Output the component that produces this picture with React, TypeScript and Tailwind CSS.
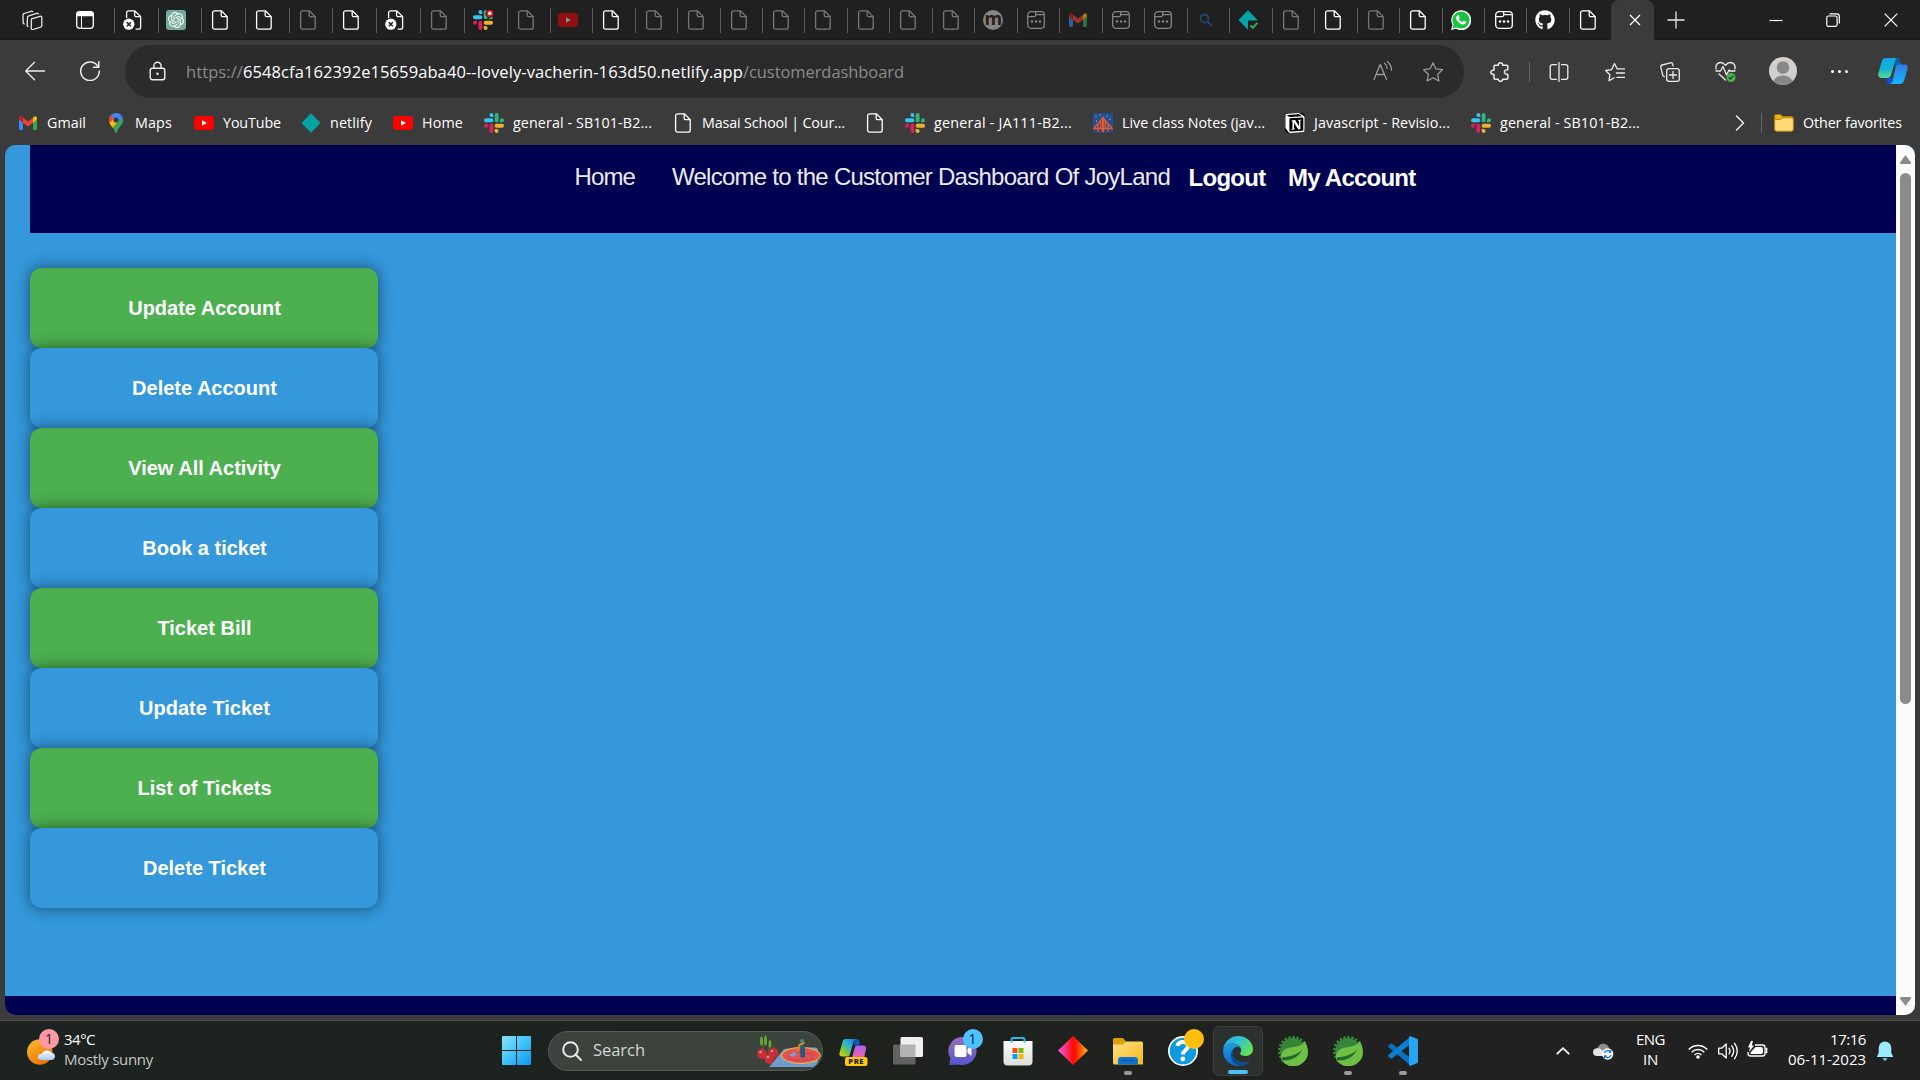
import { useLayoutEffect, useRef, useState, type ReactNode } from "react";
import { FaGithub } from "react-icons/fa";
import { SiOpenai, SiNotion } from "react-icons/si";

/** Text set to a given advance width by adjusting its letter spacing. */
function Fit({ text, width, className = "" }: { text: string; width: number; className?: string }) {
  const ref = useRef<HTMLSpanElement>(null);
  const [spacing, setSpacing] = useState(0);
  useLayoutEffect(() => {
    if (ref.current) setSpacing((width - ref.current.getBoundingClientRect().width) / text.length);
  }, [text, width]);
  return (
    <span ref={ref} className={`inline-block whitespace-pre ${className}`} style={{ letterSpacing: `${spacing}px` }}>
      {text}
    </span>
  );
}

/* ---------- small icons ---------- */

const PageIcon = ({ className = "" }: { className?: string }) => (
  <svg viewBox="0 0 20 20" className={`h-5 w-5 ${className}`} fill="none" stroke="currentColor" strokeWidth="1.3" strokeLinejoin="round">
    <path d="M4.6.8h6.8l5.8 5.8v10.6a2 2 0 0 1-2 2H4.6a2 2 0 0 1-2-2V2.8a2 2 0 0 1 2-2Z" />
    <path d="M11.2.8v4.4a1.5 1.5 0 0 0 1.5 1.5h4.5" />
  </svg>
);

const BlockedPageIcon = () => (
  <svg viewBox="0 0 20 20" className="h-5 w-5" fill="none">
    <path d="M3.6 8V2.8a2 2 0 0 1 2-2h6.2l5.8 5.8v10.6a2 2 0 0 1-2 2h-3M11.6.8v4.4a1.5 1.5 0 0 0 1.5 1.5h4.5" stroke="#fff" strokeWidth="1.3" />
    <circle cx="5.8" cy="14.2" r="5.6" fill="#fff" />
    <path d="m3.8 12.2 4 4m0-4-4 4" stroke="#202020" strokeWidth="1.5" />
  </svg>
);

const SlackIcon = ({ badge = false }: { badge?: boolean }) => (
  <svg viewBox="0 0 20 20" className="h-5 w-5">
    <g fill="#36c5f0">
      <rect x="0" y="5.3" width="9.3" height="3.9" rx="1.95" />
      <path d="M7.4 0a1.95 1.95 0 0 1 1.9 2v2H7.4a2 2 0 0 1 0-4Z" />
    </g>
    <g fill="#2eb67d">
      <rect x="10.7" y="0" width="3.9" height="9.3" rx="1.95" />
      <path d="M20 7.3a1.95 1.95 0 0 1-2 1.9h-2V7.3a2 2 0 0 1 4 0Z" />
    </g>
    <g fill="#ecb22e">
      <rect x="10.7" y="10.8" width="9.3" height="3.9" rx="1.95" />
      <path d="M12.6 20a1.95 1.95 0 0 1-1.9-2v-2h1.9a2 2 0 0 1 0 4Z" />
    </g>
    <g fill="#e01e5a">
      <rect x="5.4" y="10.7" width="3.9" height="9.3" rx="1.95" />
      <path d="M0 12.7a1.95 1.95 0 0 1 2-1.9h2v1.9a2 2 0 0 1-4 0Z" />
    </g>
    {badge && (
      <>
        <circle cx="16.8" cy="3.4" r="4.4" fill="#202020" />
        <circle cx="16.8" cy="3.4" r="3.6" fill="#e8101c" />
        <circle cx="16.8" cy="3.4" r="1.8" fill="#fff" />
      </>
    )}
  </svg>
);

const YouTubeIcon = ({ className = "" }: { className?: string }) => (
  <svg viewBox="0 0 20 20" className={`h-5 w-5 ${className}`}>
    <rect x="0" y="3" width="20" height="14" rx="3.2" fill="#f00" />
    <path d="M8 7.2v5.6l4.8-2.8Z" fill="#fff" />
  </svg>
);

const GmailIcon = ({ className = "" }: { className?: string }) => (
  <svg viewBox="0 0 20 20" className={`h-5 w-5 ${className}`}>
    <path d="M1 5v10.8c0 .7.5 1.2 1.2 1.2H5V9.2L1 6Z" fill="#4285f4" />
    <path d="M19 5v10.8c0 .7-.5 1.2-1.2 1.2H15V9.2L19 6Z" fill="#34a853" />
    <path d="M15 5.5v4.2l4-3.1V5.3c0-2-2.2-2.6-3.4-1.5Z" fill="#fbbc04" />
    <path d="M5 9.7V4.8l5 3.7 5-3.7v4.9l-5 3.8Z" fill="#ea4335" />
    <path d="M1 5.3v1.3l4 3.1V4.8l-.6-1C3.200 2.800 1 3.400 1 5.300Z" fill="#c5221f" />
  </svg>
);

const MapsIcon = () => (
  <svg viewBox="0 0 20 20" className="h-5 w-5">
    <path d="M10 0a7 7 0 0 1 6.700 5L10 12.500 4.800 11.500C3.500 9.500 3 8.500 3 7a7 7 0 0 1 7-7Z" fill="#4285f4" />
    <path d="M4.600 2.500 8 5.500l-4.300 5C3.200 9.200 3 8.200 3 7c0-1.700.6-3.300 1.600-4.500Z" fill="#ea4335" />
    <path d="m3.600 10 4.200-4.900 4.700 3.500-5.900 6.300C5.200 13 4.300 11.800 3.600 10Z" fill="#fbbc04" />
    <path d="M16.700 5c.9 2.900 0 5.300-1.600 7.200-2 2.400-3.500 4.300-4 6.800-.3 1.300-1.700 1.300-2 0-.5-1.700-1.200-2.900-2.300-4.300Z" fill="#34a853" />
    <circle cx="10" cy="7" r="2.600" fill="#303d55" />
  </svg>
);

const NetlifyIcon = ({ check = false }: { check?: boolean }) => (
  <svg viewBox="0 0 20 20" className="h-5 w-5">
    <path d="M10 .2 19.500 10 10 19.800.5 10Z" fill="#05a3a4" />
    {check && (
      <>
        <path d="M10 20v-9.500h10V20Z" fill="#202020" />
        <path d="m12.300 15.300 2.500 2.500 4.500-5" fill="none" stroke="#2fb84a" strokeWidth="1.900" />
      </>
    )}
  </svg>
);

const CalendarIcon = ({ className = "" }: { className?: string }) => (
  <svg viewBox="0 0 20 20" className={`h-5 w-5 ${className}`} fill="none" stroke="currentColor" strokeWidth="1.300">
    <rect x="1.700" y="1.700" width="16.600" height="16.600" rx="3.200" />
    <path d="M1.700 6.600h6.500c1.200 0 1.500-.7 1.500-1.500V1.700M9.700 4.600h8" />
    <g fill="currentColor" stroke="none">
      <circle cx="6" cy="11.500" r="1.200" /><circle cx="10" cy="11.500" r="1.200" /><circle cx="14" cy="11.500" r="1.200" />
    </g>
  </svg>
);

const NotionIcon = () => (
  <span className="grid h-5 w-5 place-items-center">
    <SiNotion className="h-5 w-5 rounded-sm bg-black text-white" />
  </span>
);

const BridgeIcon = () => (
  <svg viewBox="0 0 20 20" className="h-5 w-5">
    <path d="M0 0h20v20H0Z" fill="#214f92" />
    <path d="M0 17.500h20V20H0Z" fill="#2b4478" />
    <path d="M10 4v15M0 15.500h20M1 15l9-10 9 10M5 10.500V19M15 10.500V19M7.500 8v8M12.500 8v8" stroke="#e8582a" strokeWidth="1.300" fill="none" />
    <path d="M8.700 4h2.600v15H8.700Z" fill="#e8582a" />
    <g fill="#fff"><circle cx="3" cy="3" r=".6" /><circle cx="7" cy="2" r=".5" /><circle cx="14" cy="3" r=".6" /><circle cx="17" cy="6" r=".6" /><circle cx="3.500" cy="8" r=".5" /></g>
  </svg>
);

const FolderIcon = () => (
  <svg viewBox="0 0 20 20" className="h-5 w-5">
    <path d="M.7 3.200C.7 2 1.300 1.500 2.200 1.500h4.500l1.800 2H17a2.200 2.200 0 0 1 2.300 2.200V8H.7Z" fill="#e9b520" stroke="#a87a08" />
    <path d="M.7 6.500h5.600l2.200-1.700h8.800a2 2 0 0 1 2 2v9.400a2 2 0 0 1-2 2H2.700a2 2 0 0 1-2-2Z" fill="#ffd978" stroke="#b98a12" />
  </svg>
);

/* ---------- tab strip ---------- */

type TabKind = "blocked" | "gpt" | "page" | "dim" | "slack" | "yt" | "m" | "cal" | "calDim" | "gmail" | "search" | "netlify" | "whatsapp" | "github";

const tabs: TabKind[] = [
  "blocked", "gpt", "page", "page", "dim", "page", "blocked", "dim", "slack",
  "dim", "yt", "page", "dim", "dim", "dim", "dim", "dim", "dim", "dim", "dim",
  "m", "calDim", "gmail", "calDim", "calDim", "search", "netlify", "dim", "page",
  "dim", "page", "whatsapp", "cal", "github", "page",
];

function TabGlyph({ kind }: { kind: TabKind }) {
  switch (kind) {
    case "blocked": return <BlockedPageIcon />;
    case "gpt": return <span className="-ml-px grid h-5 w-5 place-items-center rounded-[3px] bg-[#74aa9c]"><SiOpenai className="h-4 w-4 text-white" /></span>;
    case "page": return <PageIcon className="text-white" />;
    case "dim": return <PageIcon className="text-[#777]" />;
    case "slack": return <SlackIcon badge />;
    case "yt": return <YouTubeIcon className="-ml-px opacity-50" />;
    case "m": return <span className="grid h-5 w-5 place-items-center rounded-full bg-[#878583] pb-1 font-['Open_Sans',sans-serif] text-[18px] leading-4 font-bold text-[#2b1c18]">m</span>;
    case "cal": return <CalendarIcon className="ml-px text-white" />;
    case "calDim": return <CalendarIcon className="text-[#858585]" />;
    case "gmail": return <GmailIcon className="opacity-60" />;
    case "search": return <svg viewBox="0 0 20 20" className="h-5 w-5" fill="none" stroke="#1b466f" strokeWidth="1.800"><circle cx="8.500" cy="8.500" r="4" /><path d="m11.500 11.500 4.500 4.500" /></svg>;
    case "netlify": return <NetlifyIcon check />;
    case "whatsapp": return <svg viewBox="0 0 20 20" className="h-5 w-5"><path d="M0 20 1.500 15A10 10 0 1 1 5 18.700Z" fill="#fff" /><circle cx="10" cy="10" r="8.600" fill="#18c43f" /><path d="M1.600 18.400 3 13l3.500 4Z" fill="#18c43f" /><path d="M6.900 5.200c.5-.2.900 0 1 .3l.8 1.900c.1.300 0 .5-.9 1.500.8 1.500 1.900 2.500 3.500 3.200l1-1.200c.2-.3.5-.3.800-.2l1.700.9c.4.2.4.4.3.9-.4 1.600-2 2.200-3.400 1.900-3.200-.7-5.300-2.700-6.400-5.200-.5-1.400-.1-3.200 1.600-4Z" fill="#fff" /></svg>;
    case "github": return <FaGithub className="h-5 w-5 text-white" />;
  }
}

function TabStrip() {
  return (
    <div className="flex h-10 items-center bg-[#202020] text-white shadow-[inset_0_-1px_0_#1a1a1a]">
      <div className="flex w-[114px] items-center">
        <svg viewBox="0 0 22 20" className="ml-[21px] h-5 w-[22px]" fill="none" stroke="#e6e6e6" strokeWidth="1.300" strokeLinejoin="round">
          <path d="M10.500 8.800 19 6.300c1-.3 1.800.2 1.800 1.200v8c0 .9-.4 1.400-1.200 1.700L12 19.500c-1 .3-1.700-.1-1.700-1.100v-8c0-.8.200-1.300.8-1.600Z" />
          <path d="M7.500 16.500c-1 0-1.500-.6-1.300-1.500l.3-7.500c0-.9.500-1.400 1.300-1.700l7.700-2.400c1-.3 1.800.1 1.900 1" />
          <path d="M3.600 14c-1-.1-1.500-.7-1.500-1.500L2 5.200c0-.9.500-1.500 1.300-1.700l6.700-2.200c1-.3 1.700 0 1.900.8" />
        </svg>
        <svg viewBox="0 0 18 18" className="ml-[33px] h-[18px] w-[18px]" fill="none">
          <rect x=".7" y=".7" width="16.600" height="16.600" rx="3" stroke="#fff" strokeWidth="1.300" />
          <path d="M.3 5.200V3A2.700 2.700 0 0 1 3 .3h12A2.700 2.700 0 0 1 17.700 3v2.200ZM5 5v12h1V5Z" fill="#fff" />
        </svg>
      </div>
      {tabs.map((kind, i) => (
        <div key={i} className={`flex h-[25px] shrink-0 items-center border-l border-[#5c5c5c] pl-[8px] ${i < 9 ? "w-[43.700px]" : "w-[42.480px]"}`}>
          <TabGlyph kind={kind} />
        </div>
      ))}
      <div className="flex h-10 w-[43px] shrink-0 items-center justify-center self-end rounded-t-[8px] bg-[#3b3b3b] pl-1">
        <svg viewBox="0 0 12 12" className="h-3 w-3" stroke="#fff" strokeWidth="1.300"><path d="m1 1 10 10M11 1 1 11" /></svg>
      </div>
      <svg viewBox="0 0 18 18" className="ml-[13px] h-[18px] w-[18px]" stroke="#e8e8e8" strokeWidth="1.300"><path d="M9 .5v17M.5 9h17" /></svg>
      <div className="ml-auto flex items-center">
        <svg viewBox="0 0 14 14" className="mr-[43px] h-[14px] w-[14px]" stroke="#fff" strokeWidth="1.200"><path d="M.5 7.500h13" /></svg>
        <svg viewBox="0 0 14 14" className="mr-[44px] h-[14px] w-[14px]" fill="none" stroke="#fff" strokeWidth="1.200"><rect x=".8" y="3" width="10.300" height="10.300" rx="1.500" /><path d="M3.500.8h7.200c1.600 0 2.600 1 2.600 2.600v7.200" /></svg>
        <svg viewBox="0 0 14 14" className="mr-[22px] h-[14px] w-[14px]" stroke="#fff" strokeWidth="1.200"><path d="m.7.7 12.600 12.600M13.300.7.7 13.300" /></svg>
      </div>
    </div>
  );
}

/* ---------- toolbar ---------- */

const Cell = ({ className, children }: { className: string; children: ReactNode }) => (
  <div className={`flex shrink-0 items-center justify-center ${className}`}>{children}</div>
);

const line = { fill: "none", stroke: "#ececec", strokeWidth: 1.3, strokeLinejoin: "round", strokeLinecap: "round" } as const;

function Toolbar() {
  return (
    <div className="flex h-[58px] items-center pt-[5px]">
      <Cell className="w-[70px]"><svg viewBox="0 0 20 20" className="mb-px h-5 w-5" {...line}><path d="M19.500 10H.7M9.500 1.300.7 10l8.800 8.700" /></svg></Cell>
      <Cell className="w-10"><svg viewBox="0 0 20 20" className="mb-px h-5 w-5" {...line} strokeWidth={1.5}><path d="M18.200 5.800A9.300 9.300 0 1 0 19.300 10M18.800.8v5.400h-5.300" /></svg></Cell>
      <div className="ml-[15px] flex h-[53px] w-[1339px] shrink-0 items-center rounded-full bg-[#2b2b2b] pl-[24px] font-['Open_Sans',sans-serif] text-[16.500px] text-[#8c8c8c]">
        <svg viewBox="0 0 18 20" className="mr-[20px] mb-px h-5 w-[17px]" {...line} strokeWidth={1.5}><rect x="1.300" y="7" width="15.400" height="12.200" rx="2.300" /><path d="M5.200 7V4.500a3.800 3.800 0 0 1 7.600 0V7" /><circle cx="9" cy="13" r=".6" fill="#fff" /></svg>
        <span className="flex leading-6">
          <Fit text="https://" width={57} />
          <Fit text="6548cfa162392e15659aba40--lovely-vacherin-163d50.netlify.app" width={500} className="text-white" />
          <Fit text="/customerdashboard" width={161} />
        </span>
        <svg viewBox="0 0 20 20" className="mr-[30px] mb-px ml-auto h-5 w-5" fill="none" stroke="#9a9a9a" strokeWidth="1.300" strokeLinecap="round"><path d="M1 18.500 7 4h.5l6 14.500M3.200 13.500h8.200M11.500 2.200c1.600 1.200 2.500 3 2.500 5.200M14.500.800c2.500 2 4 5 4 8.400" /></svg>
        <svg viewBox="0 0 20 20" className="mr-[21px] h-5 w-5" fill="none" stroke="#9a9a9a" strokeWidth="1.300" strokeLinejoin="round"><path d="m10 .8 2.900 6 6.500.9-4.700 4.600 1.100 6.600L10 15.800l-5.800 3.100 1.100-6.600L.6 7.700l6.500-.9Z" /></svg>
      </div>
      <Cell className="ml-[9px] w-[53px]">
        <svg viewBox="0 0 20 20" className="h-5 w-5" {...line} strokeWidth={1.5}><path d="M5 3.200h3.300c-.2-3.200 4.600-3.200 4.400 0h4.100c.7 0 1 .4 1 1v3.500c-4.500-.7-4.500 5.300 0 4.600v3.900c0 .6-.3 1-1 1h-4.100c.2 2.800-4.600 2.800-4.400 0H5c-.7 0-1-.4-1-1v-3.700c-4.300.2-4.300-4.600 0-4.400V4.200c0-.6.300-1 1-1Z" /></svg>
      </Cell>
      <Cell className="w-[6px]"><div className="h-5 w-px bg-[#666]" /></Cell>
      <Cell className="w-[53px]"><svg viewBox="0 0 20 20" className="h-5 w-5" {...line}><path d="M7.500 2.700H3.200a2 2 0 0 0-2 2v10.600a2 2 0 0 0 2 2h4.300M12.500 2.700h4.300a2 2 0 0 1 2 2v10.600a2 2 0 0 1-2 2h-4.300M10 .5v19" /></svg></Cell>
      <Cell className="w-[60px]"><svg viewBox="0 0 20 20" className="h-5 w-5" {...line}><path d="M7.500 16.800 4 18.800l.9-6L.7 8.500l6-.9L9.500 1.500l2.600 5.300M12 6.800h7.500M11.300 11h8.200M12 15.300h7.500M7.500 16.800l1.700-1" /></svg></Cell>
      <Cell className="w-[50px]"><svg viewBox="0 0 20 20" className="h-5 w-5" {...line}><rect x="6.700" y="6.700" width="12.600" height="12.600" rx="2.300" /><path d="M13 9.500v7M9.500 13h7M4.500 14.700c-1 0-1.500-.5-1.700-1.300L.8 5.200c-.2-1.200.2-1.900 1.300-2.200l8.300-2.200c1.100-.3 1.900.1 2.200 1.200l.5 1.800" /></svg></Cell>
      <Cell className="w-[60px]">
        <svg viewBox="0 0 21 21" className="h-[21px] w-[21px]" {...line}>
          <path d="M1.200 8C0 4.500 2.500 1.500 5.500 1.500c2.300 0 3.700 1.200 5 2.700 1.300-1.500 2.700-2.700 5-2.700 3 0 5.500 3 4.300 6.500M1 10h4.500l2.500-4.500 3.500 8.500 2.500-5 .8 1H20M4 13l6.500 6" />
          <circle cx="16" cy="16.500" r="4.500" fill="#4caf50" stroke="none" /><path d="m14 16.600 1.400 1.400 2.600-2.900" stroke="#174a1b" />
        </svg>
      </Cell>
      <Cell className="w-[56px]">
        <svg viewBox="0 0 28 28" className="mb-px h-7 w-7"><defs><clipPath id="av"><circle cx="14" cy="14" r="14" /></clipPath></defs><g clipPath="url(#av)"><path d="M0 0h28v28H0Z" fill="#d2d0ce" /><circle cx="14" cy="10.500" r="6.300" fill="#8a8886" /><ellipse cx="14" cy="26" rx="10" ry="7.500" fill="#8a8886" /></g></svg>
      </Cell>
      <Cell className="w-[57px]"><div className="flex gap-1"><i className="h-[3px] w-[3px] rounded-full bg-white" /><i className="h-[3px] w-[3px] rounded-full bg-white" /><i className="h-[3px] w-[3px] rounded-full bg-white" /></div></Cell>
      <Cell className="w-[49px]">
        <svg viewBox="0 0 30 28" className="mb-px h-7 w-[30px]">
          <defs>
            <linearGradient id="c1" x1="0" y1="0" x2="0" y2="1"><stop offset="0" stopColor="#0fa8ea" /><stop offset=".5" stopColor="#12b3d5" /><stop offset="1" stopColor="#52dc92" /></linearGradient>
            <linearGradient id="c2" x1="0" y1="0" x2="0" y2="1"><stop offset="0" stopColor="#2f7be8" /><stop offset="1" stopColor="#14b9f5" /></linearGradient>
          </defs>
          <path d="M15.500 1h4c1.500 0 2 1 2.500 2.500L23.500 8 17 10Z" fill="#0a62a3" />
          <path d="M8 21h7l-2 6h-1.500c-1.500 0-2-1-2.300-2Z" fill="#1648e0" />
          <path d="M7.500 1H20c-1.700 0-2.500 1-3 3l-4 14c-.6 2-1.500 3-3.500 3H3.500C.8 21-.4 19 .3 16.500l3.400-12C4.400 2.200 5.500 1 7.500 1Z" fill="url(#c1)" />
          <path d="M20.500 7.500h6c2.800 0 3.700 2 3 4.500l-3.400 11.500c-.7 2.500-1.900 3.500-4 3.500H11.500c1.500 0 2.400-1 3-3l3-13c.4-2.300 1.200-3.500 3-3.500Z" fill="url(#c2)" />
        </svg>
      </Cell>
    </div>
  );
}

/* ---------- favourites ---------- */

const bookmarks: { icon: ReactNode; label: string; text: number; cell: string }[] = [
  { icon: <GmailIcon />, label: "Gmail", text: 39, cell: "w-[88px]" },
  { icon: <MapsIcon />, label: "Maps", text: 37, cell: "w-[88px]" },
  { icon: <YouTubeIcon />, label: "YouTube", text: 58, cell: "w-[107px]" },
  { icon: <NetlifyIcon />, label: "netlify", text: 42, cell: "w-[92px]" },
  { icon: <YouTubeIcon />, label: "Home", text: 41, cell: "w-[91px]" },
  { icon: <SlackIcon />, label: "general - SB101-B2...", text: 139, cell: "w-[189px]" },
  { icon: <PageIcon className="text-white" />, label: "Masai School | Cour...", text: 143, cell: "w-[192px]" },
  { icon: <PageIcon className="text-white" />, label: "", text: 0, cell: "w-[40px]" },
  { icon: <SlackIcon />, label: "general - JA111-B2...", text: 138, cell: "w-[188px]" },
  { icon: <BridgeIcon />, label: "Live class Notes (jav...", text: 143, cell: "w-[192px]" },
  { icon: <NotionIcon />, label: "Javascript - Revisio...", text: 136, cell: "w-[186px]" },
  { icon: <SlackIcon />, label: "general - SB101-B2...", text: 140, cell: "w-[186px]" },
];

function Favorites() {
  return (
    <div className="flex h-[47px] items-center pt-[3px] pl-[18px] font-['Open_Sans',sans-serif] text-[14.300px] leading-5 text-white">
      {bookmarks.map((b, i) => (
        <div key={i} className={`flex shrink-0 items-center gap-[9px] ${b.cell}`}>
          <span className="shrink-0">{b.icon}</span>
          {b.label && <Fit text={b.label} width={b.text} />}
        </div>
      ))}
      <div className="ml-auto flex items-center">
        <svg viewBox="0 0 10 16" className="mr-[16px] h-4 w-[10px]" {...line} strokeWidth={1.5}><path d="m1.500 1 7 7-7 7" /></svg>
        <div className="mr-[12px] h-5 w-px bg-[#666]" />
        <FolderIcon />
        <Fit text="Other favorites" width={99} className="mr-[18px] ml-[9px]" />
      </div>
    </div>
  );
}

/* ---------- page ---------- */

const actions = ["Update Account", "Delete Account", "View All Activity", "Book a ticket", "Ticket Bill", "Update Ticket", "List of Tickets", "Delete Ticket"];

function Page() {
  return (
    <div className="mx-[5px] flex h-[870px] overflow-hidden rounded-[10px] bg-[#3498db] font-['Liberation_Sans',Arial,sans-serif]">
      <div className="flex flex-1 flex-col">
        <header className="ml-[25px] flex h-[88px] bg-[#000050] pt-[18px] pl-[544.500px] text-[24px] leading-7 text-[#ebebf2]">
          <Fit text="Home" width={60.500} />
          <Fit text="Welcome to the Customer Dashboard Of JoyLand" width={498} className="ml-[37px]" />
          <Fit text="Logout" width={77} className="mt-px ml-[18.500px] font-bold text-white" />
          <Fit text="My Account" width={127.500} className="mt-px ml-[22.500px] font-bold text-white" />
        </header>
        <main className="mt-[35px] ml-[25px] flex w-[348px] flex-col">
          {actions.map((label, i) => (
            <button key={label} className={`h-20 rounded-[12px] pl-px text-center text-[20px] leading-6 font-bold text-white shadow-[0_0_15px_rgba(0,0,0,0.5)] ${i % 2 ? "bg-[#3498db]" : "bg-[#4caf50]"}`}>
              {label}
            </button>
          ))}
        </main>
        <footer className="mt-auto h-[19px] bg-[#000050]" />
      </div>
      <div className="flex w-[19px] flex-col items-center bg-[#fcfcfc]">
        <svg viewBox="0 0 11 9" className="mt-[10px] h-[9px] w-[11px]" fill="#8b8b8b"><path d="M5.500 0 11 7.500c.2.800-.2 1.500-1 1.500H1c-.8 0-1.200-.7-1-1.500Z" /></svg>
        <div className="mt-[9px] h-[531px] w-[11px] rounded-full bg-[#8b8b8b]" />
        <svg viewBox="0 0 11 9" className="mt-auto mb-[9px] h-[9px] w-[11px] rotate-180" fill="#8b8b8b"><path d="M5.500 0 11 7.500c.2.800-.2 1.500-1 1.500H1c-.8 0-1.200-.7-1-1.500Z" /></svg>
      </div>
    </div>
  );
}

/* ---------- taskbar ---------- */

function TaskbarApp({ children, running = "", active = false, badge }: { children: ReactNode; running?: string; active?: boolean; badge?: ReactNode }) {
  return (
    <div className="flex w-[55px] shrink-0 justify-center">
      <div className={`relative flex h-[50px] w-[50px] items-center justify-center rounded-[6px] ${active ? "border border-[#3a3f3b] bg-[#2d312e]" : ""}`}>
        {children}
        {badge}
        {running && <i className={`absolute bottom-px h-1 rounded-full ${running}`} />}
      </div>
    </div>
  );
}

const SpringIcon = () => (
  <svg viewBox="0 0 30 30" className="h-[30px] w-[30px]">
    <circle cx="15" cy="15" r="13.800" fill="none" stroke="#3d8d3c" strokeWidth="2.400" strokeDasharray="2.200 1.800" />
    <circle cx="15" cy="15" r="12.900" fill="#36863a" />
    <path d="M27 5c3 7 4 13 1.500 17.500A15 15 0 0 1 4 25c-2.500-5-.5-10.500 5-12.500 7-2.500 14-1 18-7.500Z" fill="#6fbf44" />
    <path d="M3.500 24.500C14 25 21 21 24.500 12.500 22 17 15 20.500 4 21.500Z" fill="#1f6a2c" />
  </svg>
);

function Taskbar() {
  return (
    <div className="flex h-[59px] items-center bg-linear-to-r from-[#1c2321] via-[#1d221d] via-45% to-[#212121] to-80% font-['Open_Sans',sans-serif] text-white">
      <div className="flex w-[475px] items-center pl-[27px]">
        <div className="relative -mt-1 h-[34px] w-[31px]">
          <svg viewBox="0 0 31 34" className="h-[34px] w-[31px]">
            <defs>
              <linearGradient id="sun" x1="0" y1="0" x2=".6" y2="1"><stop offset="0" stopColor="#f8c029" /><stop offset="1" stopColor="#f0700f" /></linearGradient>
              <linearGradient id="cl" x1="0" y1="0" x2="0" y2="1"><stop offset="0" stopColor="#fff" /><stop offset="1" stopColor="#a9c8f4" /></linearGradient>
            </defs>
            <circle cx="12.800" cy="20" r="12.800" fill="url(#sun)" />
            <path d="M14.500 28c-5 0-5-6 .3-6.300C16 18 23 17 24.500 21c4.500-.5 5 7-.5 7Z" fill="url(#cl)" />
          </svg>
          <div className="absolute -top-[3px] left-[12px] grid h-5 w-5 place-items-center rounded-full bg-[#ff99a4] text-[14px] leading-none text-[#222]">1</div>
        </div>
        <div className="-mt-[4px] ml-[6px] flex flex-col text-[15px] leading-5">
          <Fit text="34°C" width={31} className="self-start" />
          <Fit text="Mostly sunny" width={89} className="self-start text-[#c6c8c6]" />
        </div>
      </div>
      <svg viewBox="0 0 29 29" className="mr-[17px] ml-[27px] h-[29px] w-[29px]">
        <defs><linearGradient id="win" x1="0" y1="0" x2="1" y2="1"><stop offset="0" stopColor="#8be2fb" /><stop offset=".5" stopColor="#3fc3fa" /><stop offset="1" stopColor="#0f94f2" /></linearGradient></defs>
        <path d="M1 0h13v14H0V1a1 1 0 0 1 1-1Zm14 0h13a1 1 0 0 1 1 1v13H15ZM0 15h14v14H1a1 1 0 0 1-1-1Zm15 0h14v13a1 1 0 0 1-1 1H15Z" fill="url(#win)" />
      </svg>
      <div className="flex h-10 w-[275px] shrink-0 items-center overflow-hidden rounded-full border border-[#565c56] bg-[#3b433c] pl-[13px]">
        <svg viewBox="0 0 20 20" className="h-5 w-5" fill="none" stroke="#e8ebe8" strokeWidth="2"><circle cx="8.500" cy="8.500" r="7.300" /><path d="m13.500 13.500 5.500 5.500" strokeLinecap="round" /></svg>
        <Fit text="Search" width={52} className="ml-[11px] text-[16.500px] text-[#d3d6d3]" />
        <svg viewBox="0 0 66 34" className="mr-[1px] ml-auto h-[34px] w-[66px]">
          <path d="M14 33 29 15c10-1.500 22-1.500 31-1.500q3 0 3 3v11q0 5.500-6 5.500Z" fill="#6d9dcb" />
          <ellipse cx="46" cy="21.500" rx="19.500" ry="8" fill="#e4514f" stroke="#f0c34a" />
          <ellipse cx="46" cy="22.500" rx="12" ry="4" fill="none" stroke="#c5475c" strokeWidth="1.200" />
          <path d="M45 11c1-2 5-1.500 5 1.500v11h-4.500Z" fill="#1f5a80" />
          <path d="m49.500 8.500-5 2.500-2 7" stroke="#e87e1e" strokeWidth="2.200" fill="none" />
          <circle cx="47" cy="7" r="2" fill="#3f8f78" />
          <path d="m34 21 6-3.500 2 2.500-4 3Z" fill="#7aa4c8" />
          <path d="M8 17V8M14 20V7M19 17v-5" stroke="#7a5a2e" />
          <g fill="#c62f38"><circle cx="7" cy="20" r="5" /><circle cx="18.500" cy="19" r="5" /><circle cx="14.500" cy="25" r="5" /></g>
          <g fill="#ee8a8a"><circle cx="5.500" cy="18" r="1.300" /><circle cx="17" cy="17" r="1.300" /><circle cx="13" cy="23" r="1.300" /></g>
          <g fill="#62a834"><ellipse cx="6.500" cy="7" rx="1.500" ry="4.500" /><ellipse cx="10.500" cy="6.500" rx="1.500" ry="5" /><ellipse cx="15" cy="10" rx="1.300" ry="4" /></g>
        </svg>
      </div>
      <div className="ml-[2px] flex">
        <TaskbarApp>
          <svg viewBox="0 0 30 30" className="h-[30px] w-[30px]">
            <defs>
              <linearGradient id="p1" x1="1" y1="0" x2="0" y2="1"><stop offset="0" stopColor="#1f6fd8" /><stop offset=".4" stopColor="#25b3d6" /><stop offset=".7" stopColor="#7ac943" /><stop offset="1" stopColor="#f5d20a" /></linearGradient>
              <linearGradient id="p2" x1="0" y1="0" x2="0" y2="1"><stop offset="0" stopColor="#a960f0" /><stop offset="1" stopColor="#f065a8" /></linearGradient>
            </defs>
            <path d="M15 3h3c2 0 3 .7 3.500 2.500L22 8l-5 3Z" fill="#1553b0" />
            <path d="M8 3h11c-2 0-3 .8-3.500 2.500L12 18c-.5 2-1.500 2.500-3 2.500H4.500c-2.500 0-3.500-1.500-3-3.500L4.500 6C5 4 6 3 8 3Z" fill="url(#p1)" />
            <path d="M20 9.500h5c2.500 0 3.500 1.500 3 3.500L26 22H14l2.500-9.500c.5-2 1.500-3 3.500-3Z" fill="url(#p2)" />
            <rect x="7" y="21" width="22.500" height="9" rx="2" fill="#ffc60a" />
            <text x="18.200" y="28.300" fontSize="7.600" fontWeight="800" textAnchor="middle" letterSpacing=".6" fill="#222">PRE</text>
          </svg>
        </TaskbarApp>
        <TaskbarApp>
          <svg viewBox="0 0 30 30" className="h-[30px] w-[30px]"><rect x="0" y="8.500" width="22.500" height="20" rx="1.500" fill="#626262" /><rect x="7.500" y="1" width="22.500" height="20" rx="1.500" fill="#efefef" /><path d="M7.500 8.500h15V21H9a1.500 1.500 0 0 1-1.500-1.500Z" fill="#b3b3b3" /></svg>
        </TaskbarApp>
        <TaskbarApp badge={<div className="absolute top-[3px] left-[25px] grid h-5 w-5 place-items-center rounded-full bg-[#4cc2ff] text-[14px] leading-none text-[#123]">1</div>}>
          <svg viewBox="0 0 30 30" className="h-[30px] w-[30px]"><defs><linearGradient id="ch" x1="0" y1="0" x2="0" y2="1"><stop offset="0" stopColor="#9a6cb8" /><stop offset="1" stopColor="#5358cf" /></linearGradient></defs><path d="M14.500 1a14 14 0 1 1-4 27.400L1 29l1.500-6.500A14 14 0 0 1 14.500 1Z" fill="url(#ch)" /><rect x="6.500" y="9" width="12" height="12" rx="2" fill="#fff" /><path d="m19.500 13 4-3v10l-4-3Z" fill="#fff" /></svg>
        </TaskbarApp>
        <TaskbarApp>
          <svg viewBox="0 0 30 30" className="h-[30px] w-[30px]"><defs><linearGradient id="st" x1="0" y1="0" x2="0" y2="1"><stop offset="0" stopColor="#fff" /><stop offset="1" stopColor="#dcdcdc" /></linearGradient></defs><path d="M8.500 6V3.300q0-1.300 1.300-1.300h10.400q1.300 0 1.300 1.300V6" fill="none" stroke="#28b7ec" strokeWidth="2" /><path d="M.5 5h29v20.500a4 4 0 0 1-4 4h-21a4 4 0 0 1-4-4Z" fill="url(#st)" /><path d="M7.500 5h2v1.500h-2Zm13 0h2v1.500h-2Z" fill="#28b7ec" /><path d="M9.500 12h5v5h-5Z" fill="#f25022" /><path d="M15.500 12h5v5h-5Z" fill="#7fba00" /><path d="M9.500 18h5v5h-5Z" fill="#00a4ef" /><path d="M15.500 18h5v5h-5Z" fill="#ffb900" /></svg>
        </TaskbarApp>
        <TaskbarApp>
          <svg viewBox="0 0 30 30" className="h-[30px] w-[30px]"><defs><linearGradient id="di"><stop offset="0" stopColor="#f25cf0" /><stop offset=".5" stopColor="#ff0a0a" /><stop offset=".6" stopColor="#ff1a00" /><stop offset="1" stopColor="#ffbe0a" /></linearGradient></defs><path d="M15 0 30 14.500 15 29 0 14.500Z" fill="url(#di)" /></svg>
        </TaskbarApp>
        <TaskbarApp running="w-2 bg-[#9a9c9a]">
          <svg viewBox="0 0 30 30" className="h-[30px] w-[30px]"><defs><linearGradient id="fo" x1="0" y1="0" x2="1" y2="1"><stop offset="0" stopColor="#ffe08a" /><stop offset="1" stopColor="#f9b916" /></linearGradient></defs><path d="M0 3.500A1.500 1.500 0 0 1 1.500 2H10l3 3.500-2 4H0Z" fill="#e0a008" /><path d="M0 8.500h10l3-3h15.500A1.500 1.500 0 0 1 30 7v21.500H1.500A1.500 1.500 0 0 1 0 27Z" fill="url(#fo)" /><path d="M5 28.500V24a3 3 0 0 1 3-3h14a3 3 0 0 1 3 3v4.500Z" fill="#0c74cf" /><path d="M9 24.500h12" stroke="#0a4a90" strokeWidth="1.200" strokeLinecap="round" /></svg>
        </TaskbarApp>
        <TaskbarApp badge={<div className="absolute top-[3px] left-[26px] h-5 w-5 rounded-full bg-[#ffbf0f]" />}>
          <svg viewBox="0 0 30 30" className="h-[30px] w-[30px]"><circle cx="15" cy="15" r="15" fill="#fff" /><circle cx="15" cy="15" r="13.300" fill="#0e9ade" /><path d="M9.500 10c.5-5.500 10.500-5.500 10.500.3 0 4-5.200 4-5.200 8.200" fill="none" stroke="#fff" strokeWidth="4" /><circle cx="14.800" cy="23" r="2.400" fill="#fff" /></svg>
        </TaskbarApp>
        <TaskbarApp active running="w-5 bg-[#4cc2ff]">
          <svg viewBox="0 0 30 30" className="h-[30px] w-[30px]">
            <defs>
              <linearGradient id="e1" x1="0" y1="0" x2="1" y2=".5"><stop offset="0" stopColor="#2aa6e0" /><stop offset=".5" stopColor="#2fc3d6" /><stop offset="1" stopColor="#62e05a" /></linearGradient>
              <linearGradient id="e2" x1="0" y1="0" x2="0" y2="1"><stop offset="0" stopColor="#1b9de2" /><stop offset="1" stopColor="#1068c4" /></linearGradient>
            </defs>
            <path d="M0 13.500C1.500 5.500 7.500 0 15 0c9 0 15 6.500 15 13 0 4.500-3.500 7-7.500 7-3.500 0-5.500-1.300-5.500-2.300 0-.8 1.200-1.300 1.200-3.500C18 9.500 13 7.500 9 7.500c-4.500 0-7.800 2.700-9 6Z" fill="url(#e1)" />
            <path d="M0 14.500C1 9.500 5 7.300 9 7.500c4.500.2 7.500 2.700 8.800 5-1.300-1.300-3-1.700-4.300-1.500C8 12 8 20 13 24c4 3.300 9 3 12.500 1.500C21 31.500 11 31.500 5.500 26.500 1.500 23 0 19 0 14.500Z" fill="url(#e2)" />
            <path d="M13.500 11c-4.500 1.500-5 8.500-1 12.700 4 4.200 9.500 3.600 13.500 1 .7-.4 1 .1.600.7C22.500 31.500 12.500 31.500 9 24.500c-2.500-5-1-11.500 4.500-13.500Z" fill="#0b4a92" />
          </svg>
        </TaskbarApp>
        <TaskbarApp><SpringIcon /></TaskbarApp>
        <TaskbarApp running="w-2 bg-[#9a9c9a]"><SpringIcon /></TaskbarApp>
        <TaskbarApp running="w-2 bg-[#9a9c9a]">
          <svg viewBox="0 0 30 30" className="h-[30px] w-[30px]"><path d="m.5 9.500 2-1.700q.9-.6 1.700 0L22 21.500V29L.5 11.200q-.8-.9 0-1.700Z" fill="#0a70bd" /><path d="m.5 20.500 2 1.700q.9.600 1.700 0L22 8.500V1L.5 18.800q-.8.900 0 1.700Z" fill="#0c7fd0" /><path d="M22 0l7 2.800q1 .5 1 1.700v21q0 1.200-1 1.700L22 30q-1-.3-1-1.500v-27Q21 .3 22 0Z" fill="#27a5f2" /></svg>
        </TaskbarApp>
      </div>
      <div className="ml-auto flex items-center text-[15px] leading-5">
        <svg viewBox="0 0 14 8" className="h-2 w-[14px]" fill="none" stroke="#fff" strokeWidth="1.700"><path d="m.8 7.200 6.200-6 6.200 6" /></svg>
        <svg viewBox="0 0 21 18" className="ml-[23px] h-[18px] w-[21px]"><path d="M4.500 7C5 2 11 0 14.500 3.500 16 5 16 6 16.200 7c4 .5 4 5-.2 5H7Z" fill="#8f8f8f" /><path d="M4 14c-5 0-5.500-7-.5-7.700C7 5.500 9 8 10 9l6 5Z" fill="#e4e4e4" /><circle cx="14.700" cy="12" r="5.700" fill="#fff" /><path d="M11.300 11.200a3.500 3.500 0 0 1 6-1.600M18 12.800a3.500 3.500 0 0 1-6 1.600M17.800 8v2.200h-2.200M11.500 16v-2.200h2.200" fill="none" stroke="#1474d4" strokeWidth="1.300" /></svg>
        <div className="-mt-[3px] ml-[22px] flex w-[29px] flex-col items-center"><Fit text="ENG" width={29} /><Fit text="IN" width={15} /></div>
        <svg viewBox="0 0 20 16" className="ml-[23px] h-4 w-5" fill="none" stroke="#fff" strokeWidth="1.400"><path d="M.7 6.500a12.800 12.800 0 0 1 18.600 0M3.700 9.200a8.800 8.800 0 0 1 12.600 0M6.500 11.900a5 5 0 0 1 7 0" /><circle cx="10" cy="14" r="1.800" fill="#fff" stroke="none" /></svg>
        <svg viewBox="0 0 20 18" className="ml-[10px] h-[18px] w-5" fill="none" stroke="#fff" strokeWidth="1.300" strokeLinecap="round" strokeLinejoin="round"><path d="M.7 6.200h3L8.200 2v14l-4.500-4.200h-3ZM11 6.200q2 2.800 0 5.600M13.700 3.700q4 5.300 0 10.600M16.500 1.200q5.500 7.800 0 15.600" /></svg>
        <svg viewBox="0 0 21 18" className="mb-[2px] ml-[9px] h-[18px] w-[21px]" fill="none" stroke="#fff" strokeWidth="1.300"><path d="M8 4h7.500a2.500 2.500 0 0 1 2.500 2.500v6a2.500 2.500 0 0 1-2.500 2.500H3.500A2.500 2.500 0 0 1 1 12.500V11" /><path d="M18.500 7.500h1.200v4h-1.200" /><path d="M8.500 6H14a2 2 0 0 1 2 2v3a2 2 0 0 1-2 2H3.500V11.500Z" fill="#fff" stroke="none" /><path d="M4 0 1 6.500h2l-1 4.500 5-6.500H4.700L6 0Z" fill="#fff" stroke="none" /></svg>
        <div className="-mt-[4px] ml-[20px] flex w-[78px] flex-col items-end"><Fit text="17:16" width={36} /><Fit text="06-11-2023" width={78} /></div>
        <svg viewBox="0 0 16 20" className="mr-[27px] ml-[11px] h-5 w-4"><path d="M8 .5a6.300 6.300 0 0 1 6.300 6.300V12l1.700 3.300V16H0v-.7L1.700 12V6.800A6.300 6.300 0 0 1 8 .5Z" fill="#9be9ff" /><path d="M5.500 17h5q-.5 2.700-2.500 2.700T5.500 17Z" fill="#68b8cc" /></svg>
      </div>
    </div>
  );
}

export default function App() {
  return (
    <div className="flex h-[1080px] w-[1920px] flex-col overflow-hidden bg-[#3b3b3b]">
      <TabStrip />
      <Toolbar />
      <Favorites />
      <Page />
      <div className="h-[6px] border-b border-[#4a4d4a]" />
      <Taskbar />
    </div>
  );
}
